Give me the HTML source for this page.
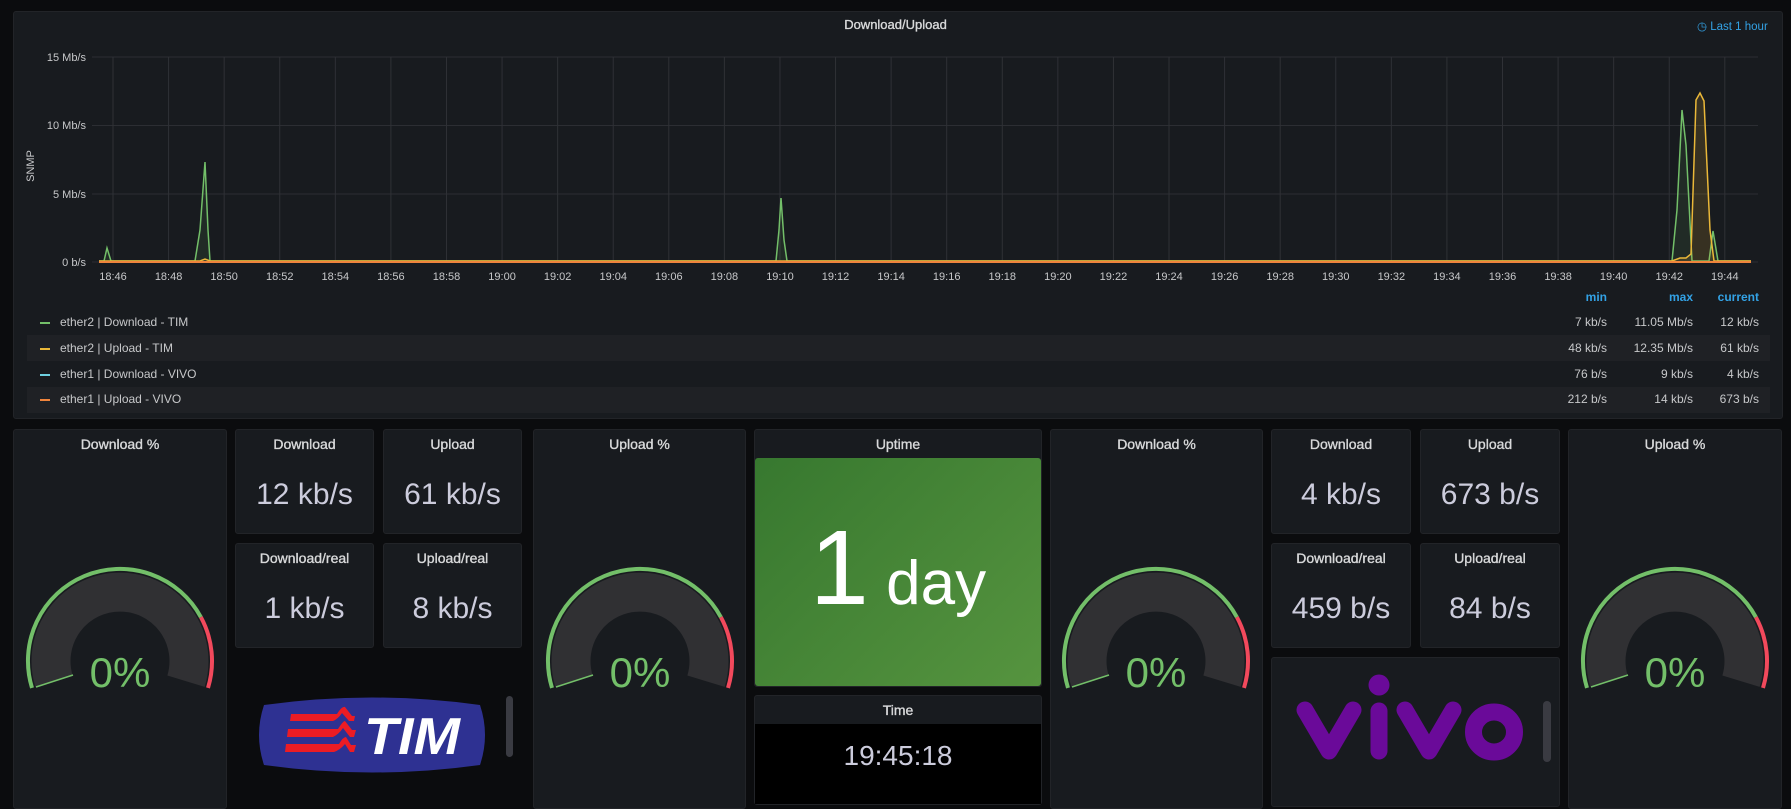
<!DOCTYPE html>
<html><head><meta charset="utf-8"><style>
*{margin:0;padding:0;box-sizing:border-box}
body{width:1791px;height:796px;background:#0b0c0e;overflow:hidden;font-family:"Liberation Sans",sans-serif;color:#d8d9da;position:relative}
.p{position:absolute;background:#181b1f;border:1px solid #222428;border-radius:3px}
.t{position:absolute;left:0;right:0;text-align:center;font-size:14px;font-weight:normal;-webkit-text-stroke:0.35px #d8d9da;color:#d8d9da}
.v{position:absolute;left:0;right:0;text-align:center;font-size:30px;color:#ccccdc}
svg{position:absolute;left:0;top:0}
</style></head><body>
<div class="p" style="left:13px;top:11px;width:1770px;height:408px"></div>
<div class="t" style="top:17px;font-size:13px">Download/Upload</div>
<div style="position:absolute;left:1697px;top:19px;font-size:11.5px;color:#33a2e5;white-space:nowrap">&#9719; Last 1 hour</div>

<svg width="1791" height="796" viewBox="0 0 1791 796" font-family="Liberation Sans, sans-serif">
<g stroke="#2c2e33" stroke-width="1">
<line x1="92" y1="57" x2="1758" y2="57"/><line x1="92" y1="125.5" x2="1758" y2="125.5"/><line x1="92" y1="194" x2="1758" y2="194"/><line x1="92" y1="262" x2="1758" y2="262"/>
</g>
<g stroke="#2f3136" id="vg"></g>
<g fill="#c7c8ca" font-size="11" text-anchor="end">
<text x="86" y="61">15 Mb/s</text><text x="86" y="129">10 Mb/s</text><text x="86" y="198">5 Mb/s</text><text x="86" y="266">0 b/s</text>
</g>
<text x="34" y="166" fill="#c7c8ca" font-size="11" text-anchor="middle" transform="rotate(-90 34 166)">SNMP</text>
<g id="xl" fill="#c7c8ca" font-size="11" text-anchor="middle"></g>
<polyline fill="rgba(115,191,105,0.1)" stroke="#73bf69" stroke-width="1.5" points="99,261 104,261 107,248 111,261 195,261 200,230 205,162 208,230 210,261 776,261 779,230 781,198 784,240 787,261 1672,261 1677,210 1682,110 1686,145 1692,261 1704,261 1709,261 1713,231 1718,261 1751,261"/>
<polyline fill="rgba(234,184,57,0.15)" stroke="#eab839" stroke-width="1.5" points="99,261 200,261 205,259 210,261 1672,261 1680,258 1686,258 1691,254 1696,100 1700,93 1704,101 1710,230 1714,261 1751,261"/>
<line x1="99" y1="262" x2="1751" y2="262" stroke="#ef843c" stroke-width="2"/>
</svg>

<div style="position:absolute;left:27px;top:335px;width:1743px;height:26px;background:#1f2125"></div>
<div style="position:absolute;left:27px;top:387px;width:1743px;height:26px;background:#1f2125"></div>
<div style="position:absolute;left:0;top:290px;width:1759px;font-size:12px;color:#33a2e5;font-weight:bold">
<span style="position:absolute;right:152px">min</span><span style="position:absolute;right:66px">max</span><span style="position:absolute;right:0">current</span></div>
<div id="lg" style="font-size:12px;color:#c7c8ca"></div>

<div class="p" style="left:13px;top:429px;width:214px;height:380px"></div>
<div class="t" style="left:13px;width:214px;top:436px">Download %</div>
<div class="p" style="left:235px;top:429px;width:139px;height:105px"></div>
<div class="t" style="left:235px;width:139px;top:436px">Download</div>
<div class="v" style="left:235px;width:139px;top:478px">12 kb/s</div>
<div class="p" style="left:383px;top:429px;width:139px;height:105px"></div>
<div class="t" style="left:383px;width:139px;top:436px">Upload</div>
<div class="v" style="left:383px;width:139px;top:478px">61 kb/s</div>
<div class="p" style="left:235px;top:543px;width:139px;height:105px"></div>
<div class="t" style="left:235px;width:139px;top:550px">Download/real</div>
<div class="v" style="left:235px;width:139px;top:592px">1 kb/s</div>
<div class="p" style="left:383px;top:543px;width:139px;height:105px"></div>
<div class="t" style="left:383px;width:139px;top:550px">Upload/real</div>
<div class="v" style="left:383px;width:139px;top:592px">8 kb/s</div>
<div class="p" style="left:533px;top:429px;width:213px;height:380px"></div>
<div class="t" style="left:533px;width:213px;top:436px">Upload %</div>

<div class="p" style="left:754px;top:429px;width:288px;height:258px"></div>
<div class="t" style="left:754px;width:288px;top:436px">Uptime</div>
<div style="position:absolute;left:755px;top:458px;width:286px;height:228px;border-radius:3px;background:linear-gradient(135deg,#37782f,#56943f)"></div>
<div style="position:absolute;left:755px;top:515px;width:286px;text-align:center;color:#fff;white-space:nowrap"><span style="font-size:106px;line-height:106px">1</span><span style="font-size:62px"> day</span></div>
<div class="p" style="left:754px;top:695px;width:288px;height:110px"></div>
<div class="t" style="left:754px;width:288px;top:702px">Time</div>
<div style="position:absolute;left:755px;top:724px;width:286px;height:80px;background:#000"></div>
<div style="position:absolute;left:755px;top:740px;width:286px;text-align:center;font-size:28px;color:#ccccdc">19:45:18</div>

<div class="p" style="left:1050px;top:429px;width:213px;height:380px"></div>
<div class="t" style="left:1050px;width:213px;top:436px">Download %</div>
<div class="p" style="left:1271px;top:429px;width:140px;height:105px"></div>
<div class="t" style="left:1271px;width:140px;top:436px">Download</div>
<div class="v" style="left:1271px;width:140px;top:478px">4 kb/s</div>
<div class="p" style="left:1420px;top:429px;width:140px;height:105px"></div>
<div class="t" style="left:1420px;width:140px;top:436px">Upload</div>
<div class="v" style="left:1420px;width:140px;top:478px">673 b/s</div>
<div class="p" style="left:1271px;top:543px;width:140px;height:105px"></div>
<div class="t" style="left:1271px;width:140px;top:550px">Download/real</div>
<div class="v" style="left:1271px;width:140px;top:592px">459 b/s</div>
<div class="p" style="left:1420px;top:543px;width:140px;height:105px"></div>
<div class="t" style="left:1420px;width:140px;top:550px">Upload/real</div>
<div class="v" style="left:1420px;width:140px;top:592px">84 b/s</div>
<div class="p" style="left:1271px;top:657px;width:289px;height:150px"></div>
<div class="p" style="left:1568px;top:429px;width:214px;height:380px"></div>
<div class="t" style="left:1568px;width:214px;top:436px">Upload %</div>

<svg width="1791" height="796" viewBox="0 0 1791 796" font-family="Liberation Sans, sans-serif">
<defs><g id="g">
<path d="M-66 20.2 A69 69 0 1 1 66 20.2" fill="none" stroke="#303033" stroke-width="39"/>
<path d="M-88 26.9 A92 92 0 0 1 80.9 -43.8" fill="none" stroke="#73bf69" stroke-width="4"/>
<path d="M80.9 -43.8 A92 92 0 0 1 88 26.9" fill="none" stroke="#f2495c" stroke-width="4"/>
<line x1="-47" y1="14" x2="-84" y2="26" stroke="#73bf69" stroke-width="1.5"/>
<text x="0" y="26" text-anchor="middle" font-size="42" fill="#73bf69">0%</text>
</g></defs>
<use href="#g" x="120" y="661"/><use href="#g" x="640" y="661"/><use href="#g" x="1156" y="661"/><use href="#g" x="1675" y="661"/>
<path d="M264 705 Q372 690 480 705 Q490 735 480 765 Q372 780 264 765 Q254 735 264 705Z" fill="#2e3192"/>
<path d="M291 714 L337 714 Q342 706 345 707 L352 716 L355 716 L354 721 L349 721 L342 713 Q338 719 333 721 L290 721Z M288 729 L338 729 Q343 721 345 721 L352 730 L356 730 L354 737 L350 737 L343 728 Q339 734 333 737 L287 737Z M286 744 L339 744 Q343 737 346 737 L351 745 L356 745 L354 752 L350 752 L345 744 Q340 750 334 752 L285 752Z" fill="#ec1c24"/>
<text x="364" y="754" font-size="52" font-weight="bold" font-style="italic" fill="#fff" textLength="96" lengthAdjust="spacingAndGlyphs">TIM</text>
<rect x="506" y="696" width="7" height="61" rx="3.5" fill="#3a3b42"/>
<g fill="none" stroke="#6a0a99" stroke-width="17" stroke-linecap="round" stroke-linejoin="round">
<path d="M1305 710 L1329 751 L1353 710"/>
<path d="M1379 711 L1379 751"/>
<path d="M1405 710 L1429 751 L1453 710"/>
</g>
<circle cx="1379" cy="685" r="10.5" fill="#6a0a99"/>
<ellipse cx="1494" cy="732" rx="20.5" ry="20" fill="none" stroke="#6a0a99" stroke-width="17"/>
<rect x="1543" y="701" width="8" height="61" rx="4" fill="#3a3b42"/>
</svg>

<script>
var vg=document.getElementById('vg'),xl=document.getElementById('xl'),s='',t='';
var labels=[];for(var h=18,m=46;;){labels.push(h+':'+(m<10?'0'+m:m));if(h==19&&m==44)break;m+=2;if(m>=60){m-=60;h++;}}
labels.forEach(function(l,i){var x=113+i*55.58;s+='<line x1="'+x+'" y1="57" x2="'+x+'" y2="262"/>';t+='<text x="'+x+'" y="280">'+l+'</text>';});
vg.innerHTML=s;xl.innerHTML=t;
var rows=[["#73bf69","ether2 | Download - TIM","7 kb/s","11.05 Mb/s","12 kb/s"],["#eab839","ether2 | Upload - TIM","48 kb/s","12.35 Mb/s","61 kb/s"],["#6ed0e0","ether1 | Download - VIVO","76 b/s","9 kb/s","4 kb/s"],["#ef843c","ether1 | Upload - VIVO","212 b/s","14 kb/s","673 b/s"]];
var ys=[315,341,367,392],h2='';
rows.forEach(function(r,i){var y=ys[i];h2+='<div style="position:absolute;left:40px;top:'+(y+7)+'px;width:10px;height:2px;background:'+r[0]+'"></div>'+
'<div style="position:absolute;left:60px;top:'+y+'px">'+r[1]+'</div>'+
'<div style="position:absolute;right:'+(1791-1607)+'px;top:'+y+'px">'+r[2]+'</div>'+
'<div style="position:absolute;right:'+(1791-1693)+'px;top:'+y+'px">'+r[3]+'</div>'+
'<div style="position:absolute;right:'+(1791-1759)+'px;top:'+y+'px">'+r[4]+'</div>';});
document.getElementById('lg').innerHTML=h2;
</script>
</body></html>
